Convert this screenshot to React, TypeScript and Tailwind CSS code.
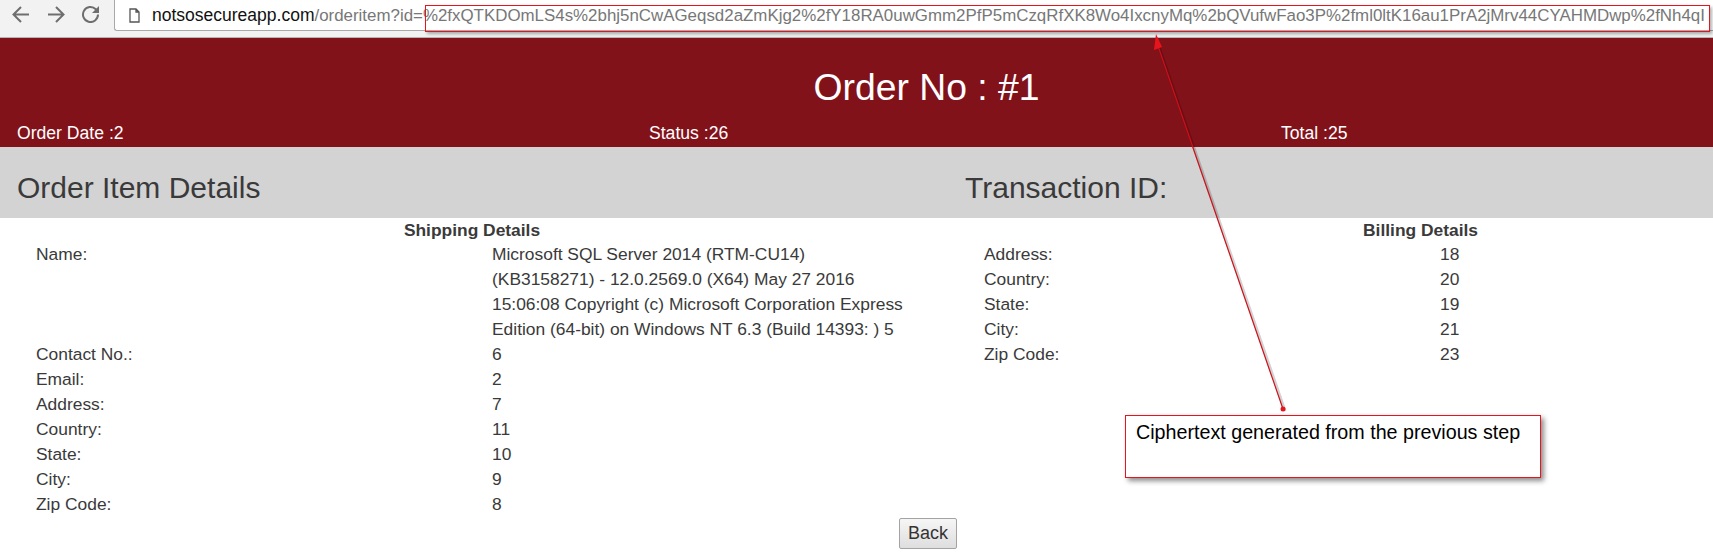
const url =
  "%2fxQTKDOmLS4s%2bhj5nCwAGeqsd2aZmKjg2%2fY18RA0uwGmm2PfP5mCzqRfXK8Wo4IxcnyMq%2bQVufwFao3P%2fml0ltK16au1PrA2jMrv44CYAHMDwp%2fNh4qI";

const shipping: [string, string][] = [
  ["Contact No.:", "6"],
  ["Email:", "2"],
  ["Address:", "7"],
  ["Country:", "11"],
  ["State:", "10"],
  ["City:", "9"],
  ["Zip Code:", "8"],
];

const billing: [string, string][] = [
  ["Address:", "18"],
  ["Country:", "20"],
  ["State:", "19"],
  ["City:", "21"],
  ["Zip Code:", "23"],
];

function Row({ label, value }: { label: string; value: string }) {
  return (
    <div className="flex">
      <div className="w-[456px] shrink-0">{label}</div>
      <div className="w-[418px]">{value}</div>
    </div>
  );
}

function BrowserBar() {
  return (
    <div className="flex h-[38px] border-b border-[#b4b4b4] bg-[#f2f2f2]">
      <div className="flex w-[114px] shrink-0 items-start pt-[5px] text-[#6e6e6e]">
        <svg width="114" height="18" viewBox="0 0 114 18" fill="none" stroke="currentColor" strokeWidth="2">
          <path d="M29 9.5H14M21 2l-7.5 7.5L21 17" />
          <path d="M48 9.5h15M56 2l7.5 7.5L56 17" />
          <path d="M98 9.5a7.5 7.5 0 1 1-2.2-5.3L98 6.5" />
          <path d="M99 1v7h-7" fill="currentColor" stroke="none" />
        </svg>
      </div>
      <div className="flex h-[31px] min-w-0 flex-1 items-center overflow-hidden rounded-bl-[3px] border-b border-l border-[#a9a9a9] bg-white pl-[14px]">
        <svg width="11" height="15" viewBox="0 0 11 15" fill="none" stroke="#555" strokeWidth="1.3" className="shrink-0">
          <path d="M1 1h6l3 3v10H1zM7 1v3h3" />
        </svg>
        <div className="ml-[12px] whitespace-nowrap text-[16.9px] text-[#777]">
          <span className="text-[17.5px] text-[#111]">notsosecureapp.com</span>/orderitem?id={url}
        </div>
      </div>
    </div>
  );
}

function Annotation() {
  return (
    <>
      <div className="absolute left-[425px] top-[5px] h-[27px] w-[1285px] border border-[#e8141c] shadow-[2px_2px_3px_rgba(0,0,0,0.3)]" />
      <svg className="absolute left-0 top-0" width="1713" height="552" fill="none">
        <path d="M1285 411L1158 44" stroke="rgba(0,0,0,0.18)" strokeWidth="3" />
        <path d="M1283 409L1158 46" stroke="#d01018" strokeWidth="1.2" />
        <path d="M1156 34L1154 50L1162 47Z" fill="#e8141c" />
        <circle cx="1283" cy="409" r="2.5" fill="#e8141c" />
      </svg>
      <div className="absolute left-[1125px] top-[415px] h-[63px] w-[416px] border border-[#e8141c] bg-white pl-[10px] pt-[3px] text-[19.7px] leading-[27px] text-black shadow-[3px_3px_5px_rgba(0,0,0,0.45)]">
        Ciphertext generated from the previous step
      </div>
    </>
  );
}

export default function App() {
  return (
    <div className="relative h-[552px] w-[1713px] overflow-hidden bg-white font-['Liberation_Sans',Arial,sans-serif] text-[17.4px] leading-[25px] text-[#3a3a3a]">
      <BrowserBar />

      <div className="h-[109px] bg-[#82121a] text-white">
        <h1 className="h-[84px] pl-[140px] pt-[28px] text-center text-[37.3px] leading-[42px]">Order No : #1</h1>
        <div className="flex pl-[17px] text-[17.6px] leading-[23px]">
          <div className="w-[632px]">Order Date :2</div>
          <div className="w-[632px]">Status :26</div>
          <div className="w-[400px]">Total :25</div>
        </div>
      </div>

      <div className="flex h-[71px] items-center bg-[#d3d3d3] pl-[17px] pt-[10px] text-[30px]">
        <div className="w-[948px]">Order Item Details</div>
        <div>Transaction ID:</div>
      </div>

      <div className="flex">
        <div className="w-[948px] shrink-0 pl-[36px]">
          <div className="-ml-[40px] h-[24px] text-center font-bold">Shipping Details</div>
          <Row
            label="Name:"
            value="Microsoft SQL Server 2014 (RTM-CU14) (KB3158271) - 12.0.2569.0 (X64) May 27 2016 15:06:08 Copyright (c) Microsoft Corporation Express Edition (64-bit) on Windows NT 6.3 (Build 14393: ) 5"
          />
          {shipping.map(([label, value]) => (
            <Row key={label} label={label} value={value} />
          ))}
        </div>
        <div className="w-[765px] shrink-0 pl-[36px]">
          <div className="-ml-[36px] h-[24px] w-[945px] text-center font-bold">Billing Details</div>
          {billing.map(([label, value]) => (
            <Row key={label} label={label} value={value} />
          ))}
        </div>
      </div>

      <button className="absolute left-[899px] top-[518px] h-[31px] w-[58px] rounded-[2px] border border-[#a3a3a3] bg-linear-to-b from-[#f6f6f6] to-[#dedede] text-[18px] text-[#333]">
        Back
      </button>

      <Annotation />
    </div>
  );
}
